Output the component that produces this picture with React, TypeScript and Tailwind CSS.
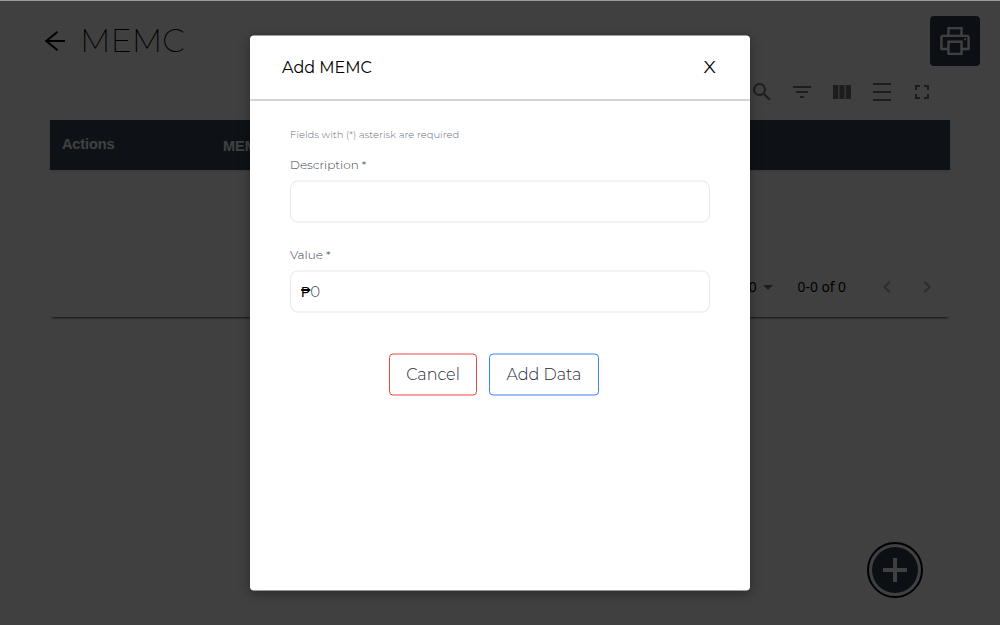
import React from "react";
import { MdSearch, MdFilterList, MdFullscreen, MdArrowDropDown, MdChevronLeft, MdChevronRight } from "react-icons/md";
import { AiOutlinePrinter } from "react-icons/ai";

function ToolButton({ children }: { children: React.ReactNode }) {
  return <button className="flex size-10 items-center justify-center text-[#757575]">{children}</button>;
}

function Toolbar() {
  return (
    <div className="flex h-10 justify-end pr-2">
      <ToolButton><MdSearch size={24} /></ToolButton>
      <ToolButton><MdFilterList size={24} /></ToolButton>
      <ToolButton>
        <svg width="24" height="24" viewBox="0 0 24 24" fill="currentColor">
          <path d="M14.67 5v14H9.33V5h5.34zm1 14H21V5h-5.33v14zm-7.34 0V5H3v14h5.33z" />
        </svg>
      </ToolButton>
      <ToolButton>
        <svg width="24" height="24" viewBox="0 0 24 24" fill="currentColor">
          <path d="M3 3h18v2H3zm0 16h18v2H3zm0-8h18v2H3z" />
        </svg>
      </ToolButton>
      <ToolButton><MdFullscreen size={24} /></ToolButton>
    </div>
  );
}

function Page() {
  return (
    <div className="flex h-full flex-col">
      <header className="flex h-[72px] items-start justify-between pl-10 pr-5 pt-4">
        <div className="flex h-[50px] items-center">
          <svg width="30" height="30" viewBox="0 0 30 30" fill="none" stroke="currentColor" strokeWidth="2">
            <path d="M25 15H6.2M17.6 5.7L6.2 15l11.4 9.3" />
          </svg>
          <h1 className="ml-2.5 text-[32px] leading-[50px] font-extralight tracking-[-0.1px]">MEMC</h1>
        </div>
        <button className="flex size-[50px] items-center justify-center rounded bg-[#334155] text-white">
          <AiOutlinePrinter size={36} />
        </button>
      </header>
      <section className="mx-[50px] h-[245px] shadow-[0_3px_2px_-2px_rgba(0,0,0,0.7)]">
        <Toolbar />
        <div className="mt-2 flex h-[50px] bg-[#3a485a] font-['Liberation_Sans',sans-serif] text-[14.5px] font-bold text-white shadow-sm">
          <div className="w-[173px] pl-3 leading-[48px] tracking-[-0.1px]">Actions</div>
          <div className="leading-[52px]">MEMC</div>
        </div>
        <div className="mt-[91px] flex h-[52px] items-center justify-end pr-2 font-['Noto_Sans',sans-serif] text-[13.8px]">
          <span>10</span>
          <MdArrowDropDown size={24} className="mr-[18px] -ml-px text-[#757575]" />
          <span className="mr-[29px]">0-0 of 0</span>
          <MdChevronLeft size={24} className="mr-4 text-[#b0b0b0]" />
          <MdChevronRight size={24} className="mr-[3px] text-[#b0b0b0]" />
        </div>
      </section>
    </div>
  );
}

function Field({ label, value }: { label: string; value?: string }) {
  return (
    <div className="mb-7 h-[62px]">
      <label className="block h-[25px] text-xs leading-[18px] font-light text-[#374151]">{label}</label>
      <div className="flex h-[42px] items-center rounded-lg border border-[#e5e7eb] px-[10px] text-[15px] font-light">
        {value && (
          <>
            <span className="font-['Liberation_Sans',sans-serif] text-sm font-normal">₱</span>
            <span className="text-[#374151]">{value}</span>
          </>
        )}
      </div>
    </div>
  );
}

function Modal() {
  return (
    <div className="absolute top-[313px] left-1/2 h-[555px] w-[500px] -translate-x-1/2 -translate-y-1/2 rounded bg-white shadow-[0_3px_12px_rgba(0,0,0,0.35)]">
      <div className="flex h-[65px] items-center justify-between border-b border-[#a7a7a7] pr-[33px] pl-8">
        <h2 className="text-base font-normal">Add MEMC</h2>
        <button className="flex size-[14px] items-center justify-center">
          <span className="inline-block scale-x-110 text-[17px]">X</span>
        </button>
      </div>
      <div className="px-10 pt-6">
        <p className="h-5 text-[10px] leading-5 font-light text-[#6b7280]">Fields with (*) asterisk are required</p>
        <div className="mt-[11px]">
          <Field label="Description *" />
          <Field label="Value *" value="0" />
        </div>
        <div className="mt-[46px] flex gap-3 pl-[99px]">
          <button className="h-[42px] w-[88px] rounded border border-[#ef4444] text-base font-light text-[#1f2937]">Cancel</button>
          <button className="h-[42px] w-[110px] rounded border border-[#3b82f6] text-base font-light text-[#1f2937]">Add Data</button>
        </div>
      </div>
    </div>
  );
}

export default function App() {
  return (
    <main className="relative h-[625px] w-[1000px] overflow-hidden bg-white font-['Montserrat','Inter',sans-serif] text-black">
      <Page />
      <button className="absolute top-[542px] left-[867px] flex size-14 items-center justify-center rounded-full border-2 border-black">
        <span className="flex size-[46px] items-center justify-center rounded-full bg-[#334155] text-white">
          <svg width="24" height="24" viewBox="0 0 24 24" stroke="currentColor" strokeWidth="4">
            <path d="M12 0v24M0 12h24" />
          </svg>
        </span>
      </button>
      <div className="absolute inset-0 border-t border-[#9b9d9d] bg-black/75" />
      <Modal />
    </main>
  );
}
